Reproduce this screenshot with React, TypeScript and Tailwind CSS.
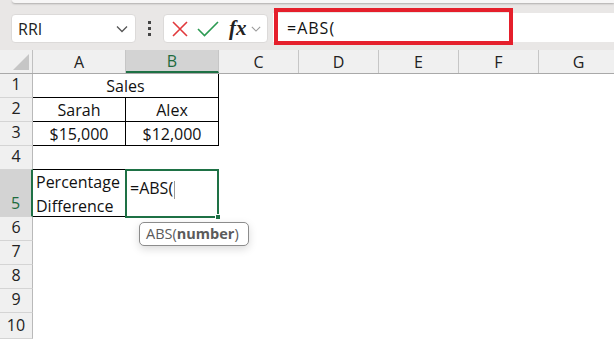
import React from "react";

const font = { fontFamily: '"Open Sans", "Liberation Sans", sans-serif' };

const cols = ["A", "B", "C", "D", "E", "F", "G"];
const colW = ["w-[93px]", "w-[93px]", "w-[80px]", "w-[80px]", "w-[80px]", "w-[80px]", "w-[80px]"];

const Chevron = ({ className }: { className?: string }) => (
  <svg width="12" height="8" viewBox="0 0 12 8" className={className}>
    <path d="M1 1.5 L6 6.5 L11 1.5" fill="none" stroke="currentColor" strokeWidth="1.3" />
  </svg>
);

const Toolbar = () => (
  <div className="relative h-[50px] bg-[#e9e7e6] flex items-start">
    <div className="absolute left-[12px] right-0 top-0 h-[3px] bg-[#f7f6f6] rounded-bl-[4px] shadow-[0_1px_2px_rgba(0,0,0,0.25)]" />
    <div className="shrink-0 mt-[14px] ml-[11px] w-[125px] h-[29px] bg-white rounded-[4px] border border-[#dcdad9] flex items-center justify-between pl-[6px] pr-[7px]">
      <span className="text-[16px] text-[#222]">RRI</span>
      <Chevron className="text-[#555]" />
    </div>
    <div className="shrink-0 mt-[21px] ml-[11px] flex flex-col gap-[3px] items-center w-[4px]">
      <span className="w-[3px] h-[3px] bg-[#444]" />
      <span className="w-[3px] h-[3px] bg-[#444]" />
      <span className="w-[3px] h-[3px] bg-[#444]" />
    </div>
    <div className="shrink-0 mt-[14px] ml-[12px] w-[105px] h-[29px] bg-white rounded-[4px] border border-[#dcdad9] flex items-center pl-[8px]">
      <svg width="16" height="16" viewBox="0 0 16 16">
        <path d="M1 1 L15 15 M15 1 L1 15" stroke="#e2393c" strokeWidth="1.6" fill="none" />
      </svg>
      <svg width="22" height="16" viewBox="0 0 22 16" className="ml-[9px]">
        <path d="M1 8 L7.5 14.5 L21 1" stroke="#2c9a52" strokeWidth="1.6" fill="none" />
      </svg>
      <span className="ml-[10px] text-[21px] italic font-bold leading-none text-[#222]" style={{ fontFamily: '"Liberation Serif", serif' }}>
        fx
      </span>
      <Chevron className="ml-[4px] text-[#9a9a9a] w-[10px]" />
    </div>
    <div className="relative mt-[13px] ml-[5px] flex-1 h-[29px] bg-white">
      <span className="absolute left-[14px] top-[3px] text-[16px] tracking-[1px] text-[#111]">=ABS(</span>
      <div className="absolute left-[1px] top-[-5px] w-[239px] h-[37px] border-[4px] border-[#e51f2b]" />
    </div>
  </div>
);

const RowHead = ({ n, h, sel }: { n: number; h: string; sel?: boolean }) => (
  <div
    className={`shrink-0 w-[33px] ${h} flex items-end justify-center pb-[1px] border-b border-[#d4d4d4] text-[16px] ${
      sel ? "bg-[#d3d3d3] text-[#1e6b3e] border-r-2 border-r-[#1e7145]" : "bg-[#f0f0f0] text-[#222] border-r border-r-[#b9b9b9]"
    }`}
  >
    {n}
  </div>
);

const Cell = ({ className, children }: { className?: string; children?: React.ReactNode }) => (
  <div className={`h-full shrink-0 text-[16px] text-[#111] ${className ?? ""}`}>{children}</div>
);

const Row = ({ n, h = "h-[24px]", sel, children }: { n: number; h?: string; sel?: boolean; children?: React.ReactNode }) => (
  <div className={`flex ${h}`}>
    <RowHead n={n} h={h} sel={sel} />
    {children}
  </div>
);

export default function App() {
  return (
    <div className="w-[614px] h-[339px] overflow-hidden bg-white relative" style={font}>
      <Toolbar />
      <div className="flex h-[24px] bg-[#f0f0f0] border-b border-[#a9a9a9]">
        <div className="shrink-0 w-[33px] h-full border-r border-[#c0c0c0] relative">
          <div className="absolute right-[3px] bottom-[3px] w-0 h-0 border-l-[16px] border-l-transparent border-b-[16px] border-b-[#c6c6c6]" />
        </div>
        {cols.map((c, i) => (
          <div
            key={c}
            className={`${colW[i]} shrink-0 h-full flex items-center justify-center text-[16px] border-r border-[#c6c6c6] ${
              c === "B" ? "bg-[#d3d3d3] text-[#1e6b3e] border-b-2 border-b-[#1e7145]" : "text-[#222]"
            }`}
          >
            {c}
          </div>
        ))}
      </div>
      <Row n={1}>
        <Cell className="w-[186px] flex items-center justify-center border-r border-b border-black">Sales</Cell>
      </Row>
      <Row n={2}>
        <Cell className="w-[93px] flex items-center justify-center border-r border-b border-black">Sarah</Cell>
        <Cell className="w-[93px] flex items-center justify-center border-r border-b border-black">Alex</Cell>
      </Row>
      <Row n={3}>
        <Cell className="w-[93px] flex items-center justify-center border-r border-b border-black">$15,000</Cell>
        <Cell className="w-[93px] flex items-center justify-center border-r border-b border-black">$12,000</Cell>
      </Row>
      <Row n={4} />
      <div className="flex h-[48px] -mt-[1px]">
        <div className="shrink-0 w-[33px] h-full flex items-end justify-center pb-[1px] border-b border-[#d4d4d4] text-[16px] bg-[#d3d3d3] text-[#1e6b3e] border-r-2 border-r-[#1e7145] border-t border-t-[#d4d4d4]">
          5
        </div>
        <Cell className="w-[93px] border-t border-b border-r border-black pl-[3px] leading-[24px]">
          Percentage
          <br />
          Difference
        </Cell>
        <div className="shrink-0 relative w-[94px] h-[49px] -ml-[1px] border-2 border-[#1e7145] pl-[3px] pt-[5px] text-[16px] text-[#111]">
          =ABS(<span className="inline-block w-px h-[18px] bg-[#999] align-middle ml-[1px]" />
          <div className="absolute right-[-4px] bottom-[-4px] w-[6px] h-[6px] bg-[#1e7145] border border-white" />
        </div>
      </div>
      <Row n={6} />
      <Row n={7} />
      <Row n={8} />
      <Row n={9} />
      <Row n={10} h="h-[26px]" />
      <div className="absolute left-[139px] top-[222px] w-[110px] h-[24px] rounded-[5px] border border-[#8c8c8c] bg-white flex items-center pl-[6px] text-[14.5px] text-[#5b5b5b] shadow-[0_3px_8px_rgba(0,0,0,0.15)]">
        ABS(<b className="font-bold">number</b>)
      </div>
    </div>
  );
}
